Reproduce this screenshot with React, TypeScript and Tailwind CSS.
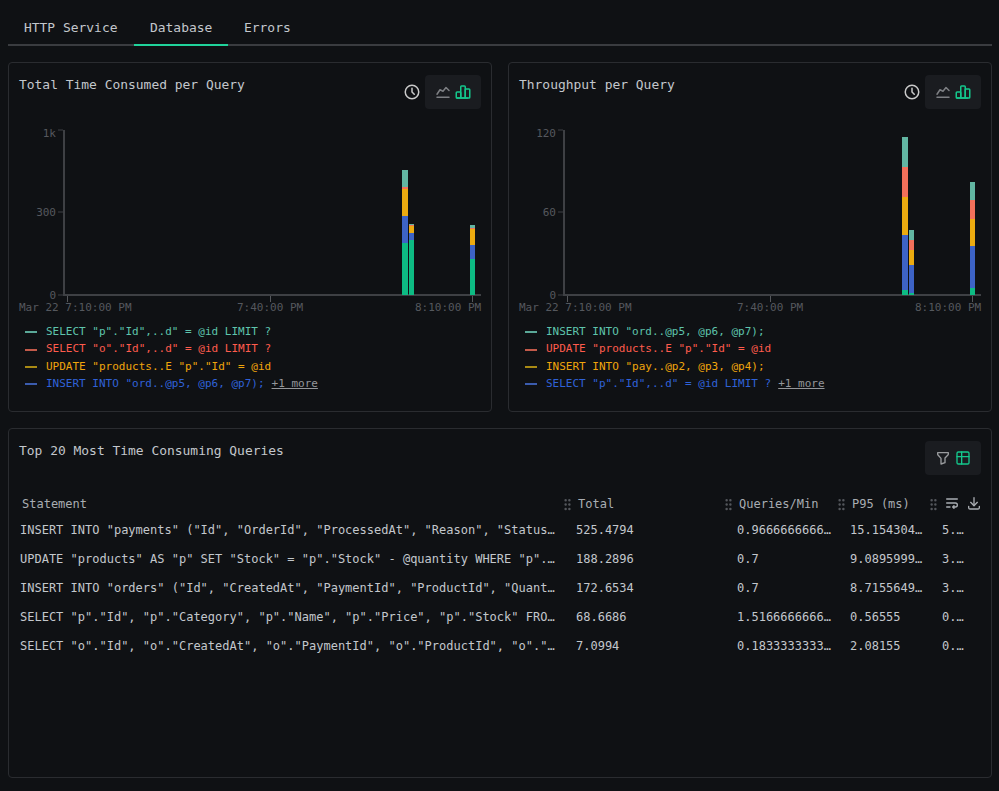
import React from 'react';
import { TbClock, TbChartLine, TbChartBar, TbFilter, TbTable, TbGripVertical, TbTextWrap, TbDownload } from 'react-icons/tb';

const C = { teal: '#62b6a2', red: '#f2705a', yellow: '#ecab10', blue: '#3d63c6', green: '#0dbb83' };

type Seg = [string, number, number];
type Bar = { x: number; w: number; segs: Seg[] };

const timeBars: Bar[] = [
  { x: 402, w: 6, segs: [[C.teal, 170, 187], [C.red, 187, 189], [C.yellow, 189, 216], [C.blue, 216, 243], [C.green, 243, 295]] },
  { x: 409, w: 5, segs: [[C.teal, 224, 225], [C.red, 225, 226], [C.yellow, 226, 233], [C.blue, 233, 240], [C.green, 240, 295]] },
  { x: 470, w: 5, segs: [[C.teal, 225, 228], [C.red, 228, 229], [C.yellow, 229, 245], [C.blue, 245, 259], [C.green, 259, 295]] },
];

const throughputBars: Bar[] = [
  { x: 402, w: 6, segs: [[C.teal, 137, 167], [C.red, 167, 197], [C.yellow, 197, 235], [C.blue, 235, 290], [C.green, 290, 295]] },
  { x: 409, w: 5, segs: [[C.teal, 230, 240], [C.red, 240, 250], [C.yellow, 250, 265], [C.blue, 265, 293], [C.green, 293, 295]] },
  { x: 470, w: 5, segs: [[C.teal, 182, 200], [C.red, 200, 219], [C.yellow, 219, 246], [C.blue, 246, 288], [C.green, 288, 295]] },
];

const Chart = ({ yLabels, bars }: { yLabels: [string, number][]; bars: Bar[] }) => (
  <svg viewBox="9 125 482 190" className="block w-[482px] h-[190px] mt-[1px]" fontFamily="'DejaVu Sans Mono', monospace" fontSize="11">
    <path d="M64 130V296M64 295H481" stroke="#3e4044" strokeWidth="2" fill="none" />
    {yLabels.map(([label, y], i) => (
      <g key={label}>
        <line x1="58" x2="63" y1={y} y2={y} stroke="#3e4044" />
        <text x="56" y={i === 0 ? y + 7 : y + 4} textAnchor="end" fill="#55585e">{label}</text>
      </g>
    ))}
    {[67.5, 270.5, 472.5].map(x => (
      <line key={x} x1={x} x2={x} y1="296" y2="302" stroke="#55575b" />
    ))}
    <text x="19" y="311" fill="#55585e">Mar 22 7:10:00 PM</text>
    <text x="237" y="311" fill="#55585e">7:40:00 PM</text>
    <text x="415" y="311" fill="#55585e">8:10:00 PM</text>
    {bars.map(b =>
      b.segs.map(([color, y1, y2]) => (
        <rect key={b.x + color} x={b.x} y={y1} width={b.w} height={y2 - y1} fill={color} />
      ))
    )}
  </svg>
);

const LegendRow = ({ dash, color, text, more }: { dash: string; color: string; text: string; more?: boolean }) => (
  <div className="flex items-center h-[17.4px] text-[11px]">
    <span className="w-[12px] h-[2px] mr-[9px]" style={{ backgroundColor: dash }} />
    <span className="whitespace-pre" style={{ color }}>{text}</span>
    {more && <span className="ml-[7px] underline text-[#94969a]">+1 more</span>}
  </div>
);

const ChartCard = ({ title, yLabels, bars, legend }: { title: string; yLabels: [string, number][]; bars: Bar[]; legend: [string, string, string][] }) => (
  <div className="h-[350px] w-[484px] border border-[#2a2c30] rounded-[4px]">
    <div className="flex justify-between items-start pl-[10px] pr-[10px] pt-[12px] h-[61px]">
      <div className="text-[12.95px] leading-[20px] text-[#c3c7cc]">{title}</div>
      <div className="flex items-center gap-[4px]">
        <TbClock size={18} color="#c9c9c9" />
        <div className="flex items-center gap-[2px] w-[56px] h-[34px] justify-center rounded-[4px] bg-[#1a1c20]">
          <TbChartLine size={18} color="#7d7f83" />
          <TbChartBar size={18} color="#14c78c" />
        </div>
      </div>
    </div>
    <Chart yLabels={yLabels} bars={bars} />
    <div className="pl-[16px] mt-[8.5px]">
      {legend.map(([dash, color, text], i) => (
        <LegendRow key={text} dash={dash} color={color} text={text} more={i === 3} />
      ))}
    </div>
  </div>
);

const rows = [
  ['INSERT INTO "payments" ("Id", "OrderId", "ProcessedAt", "Reason", "Status", "TransactionId")', '525.4794', '0.96666666666667', '15.15430499999', '5.4358'],
  ['UPDATE "products" AS "p" SET "Stock" = "p"."Stock" - @quantity WHERE "p"."Id" = @id', '188.2896', '0.7', '9.08959999999', '3.8432'],
  ['INSERT INTO "orders" ("Id", "CreatedAt", "PaymentId", "ProductId", "Quantity", "Status")', '172.6534', '0.7', '8.71556499999', '3.5236'],
  ['SELECT "p"."Id", "p"."Category", "p"."Name", "p"."Price", "p"."Stock" FROM "products" AS "p"', '68.6686', '1.51666666666667', '0.56555', '0.7541'],
  ['SELECT "o"."Id", "o"."CreatedAt", "o"."PaymentId", "o"."ProductId", "o"."Quantity" FROM "orders"', '7.0994', '0.18333333333333', '2.08155', '0.5454'],
];

const cols = 'grid grid-cols-[556px_161px_113px_92px_42px]';

const Grip = () => <TbGripVertical size={15} color="#54575c" className="-ml-[18px] mr-[3px] shrink-0" />;

const App = () => {
  return (
    <div className="w-[999px] h-[791px] bg-[#0f1114] pl-[8px] pr-[7px] overflow-hidden" style={{ fontFamily: "'DejaVu Sans Mono', monospace" }}>
      <div className="flex h-[46px] border-b-2 border-[#3a3c40] text-[12.95px] text-[#c3c7cc]">
        <div className="w-[126px] px-[16px] pt-[18px]">HTTP Service</div>
        <div className="w-[94px] px-[16px] pt-[18px] h-[46px] border-b-2 border-[#20d39b]">Database</div>
        <div className="px-[16px] pt-[18px]">Errors</div>
      </div>

      <div className="flex gap-[16px] mt-[16px]">
        <ChartCard
          title="Total Time Consumed per Query"
          yLabels={[['1k', 130], ['300', 212], ['0', 295]]}
          bars={timeBars}
          legend={[
            ['#5aa898', '#5ec4ac', 'SELECT "p"."Id",..d" = @id LIMIT ?'],
            ['#c25a4a', '#ff5c4d', 'SELECT "o"."Id",..d" = @id LIMIT ?'],
            ['#a98a14', '#f0a50c', 'UPDATE "products..E "p"."Id" = @id'],
            ['#3b5cae', '#2f62d8', 'INSERT INTO "ord..@p5, @p6, @p7);'],
          ]}
        />
        <ChartCard
          title="Throughput per Query"
          yLabels={[['120', 130], ['60', 212], ['0', 295]]}
          bars={throughputBars}
          legend={[
            ['#5aa898', '#5ec4ac', 'INSERT INTO "ord..@p5, @p6, @p7);'],
            ['#c25a4a', '#ff5c4d', 'UPDATE "products..E "p"."Id" = @id'],
            ['#a98a14', '#f0a50c', 'INSERT INTO "pay..@p2, @p3, @p4);'],
            ['#3b5cae', '#2f62d8', 'SELECT "p"."Id",..d" = @id LIMIT ?'],
          ]}
        />
      </div>

      <div className="mt-[16px] h-[350px] border border-[#2a2c30] rounded-[4px]">
        <div className="flex justify-between items-start pl-[10px] pr-[10px] pt-[12px] h-[60px]">
          <div className="text-[12.95px] leading-[20px] text-[#c3c7cc]">Top 20 Most Time Consuming Queries</div>
          <div className="flex items-center justify-center gap-[4px] w-[56px] h-[34px] rounded-[4px] bg-[#1a1c20]">
            <TbFilter size={16} color="#9a9c9f" />
            <TbTable size={16} color="#14c78c" />
          </div>
        </div>
        <div className={`${cols} pl-[5px] h-[27px] pt-[3px] items-center text-[12px] text-[#a9adb2]`}>
          <div className="pl-[8px]">Statement</div>
          <div className="flex items-center pl-[8px]"><Grip />Total</div>
          <div className="flex items-center pl-[8px]"><Grip />Queries/Min</div>
          <div className="flex items-center pl-[8px]"><Grip />P95 (ms)</div>
          <div className="flex items-center pl-[8px]">
            <Grip />
            <TbTextWrap size={16} color="#a9adb2" className="shrink-0 -mt-[2px]" />
            <TbDownload size={16} color="#a9adb2" className="shrink-0 ml-[6px] -mt-[2px]" />
          </div>
        </div>
        {rows.map(row => (
          <div key={row[1]} className={`${cols} pl-[5px] h-[28.8px] items-center text-[12px] text-[#c3c7cc]`}>
            {row.map((cell, i) => (
              <div key={i} className={i === 0 ? 'pl-[6px] pr-[12px] truncate' : 'pl-[6px] pr-[10px] truncate'}>{cell}</div>
            ))}
          </div>
        ))}
      </div>
    </div>
  );
};

export default App;
